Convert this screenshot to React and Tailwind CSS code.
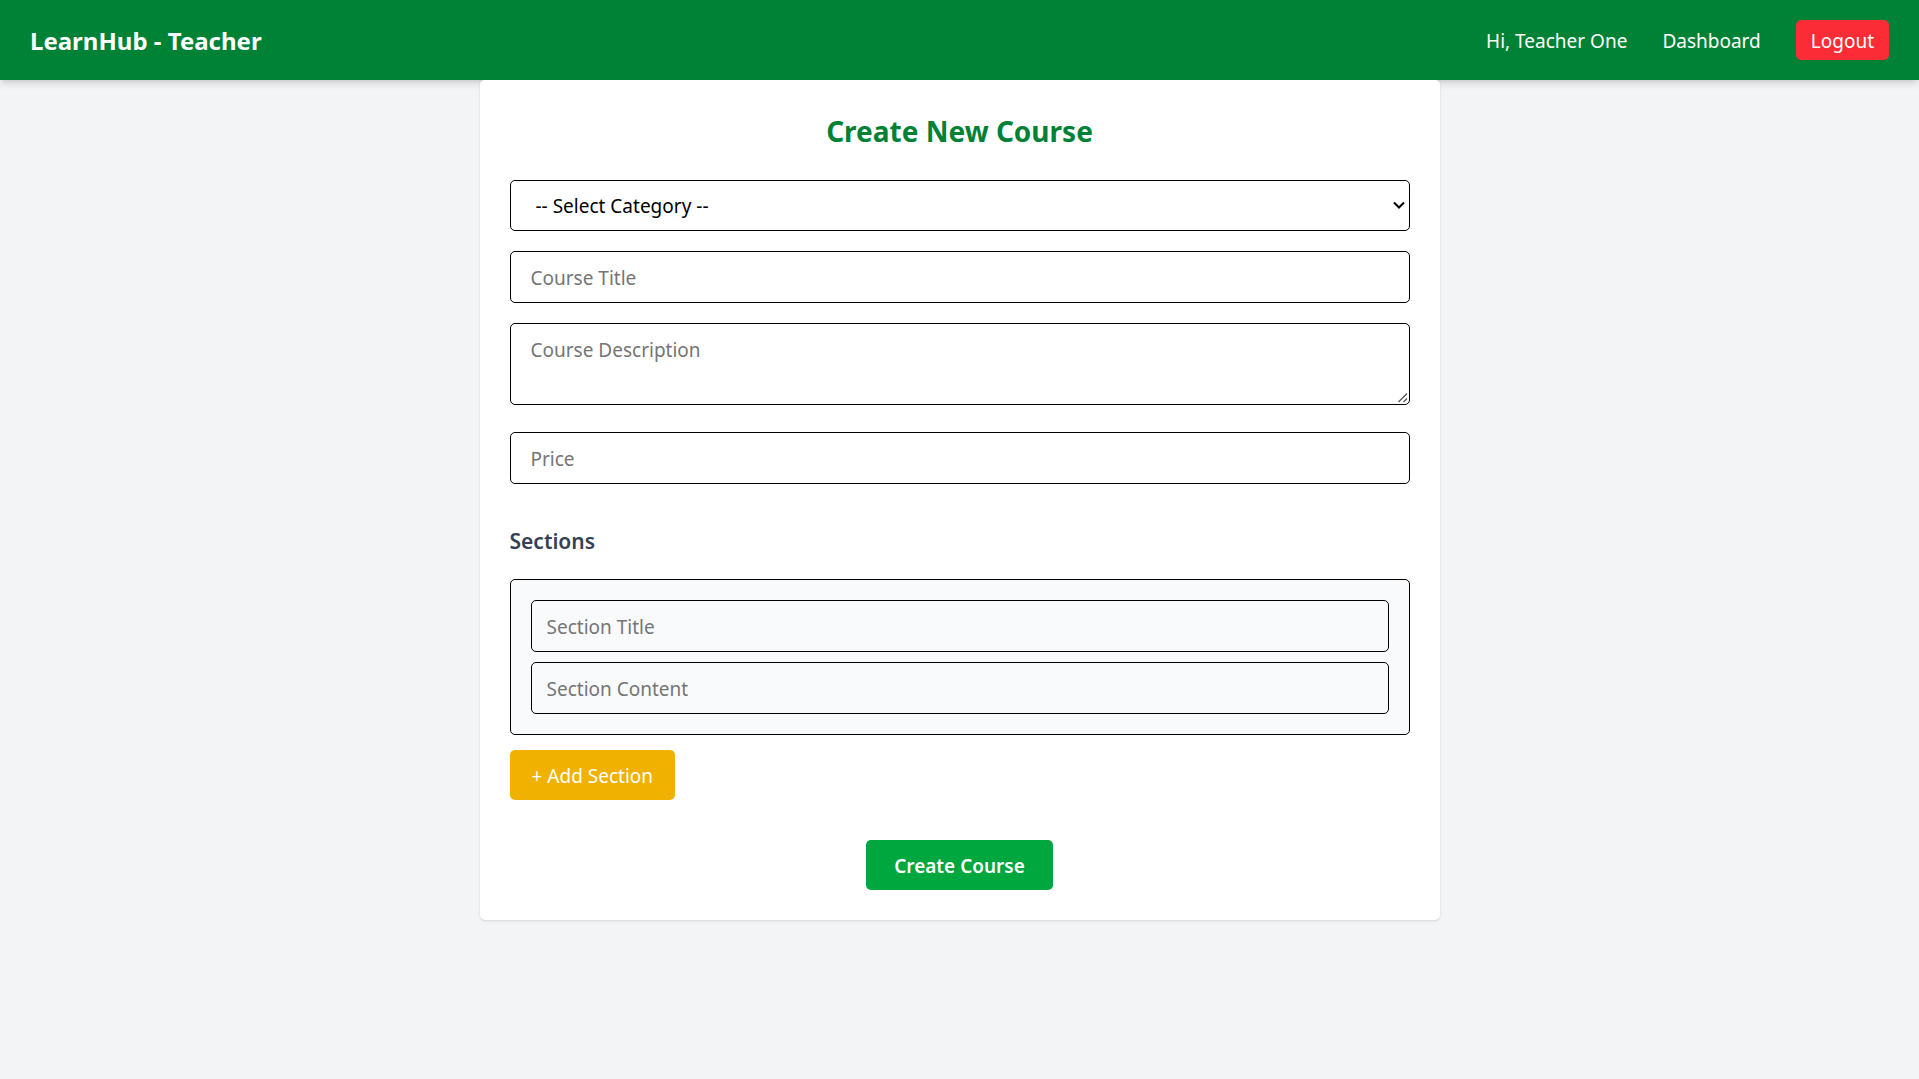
import { useState } from "react";

const field = "block w-full rounded-[5px] border border-black pt-[13px] pb-[11px] leading-[26px] placeholder:text-[#757575]";

function Navbar() {
  return (
    <nav className="flex h-20 items-center justify-between bg-[#008236] px-[30px] text-white shadow-[0_5px_8px_-1px_rgb(0_0_0/0.1),0_3px_5px_-2px_rgb(0_0_0/0.1)]">
      <h1 className="pt-0.5 text-2xl font-bold">LearnHub - Teacher</h1>
      <div className="flex items-center gap-[35px]">
        <span className="pt-0.5">Hi, Teacher One</span>
        <a href="#dashboard" className="pt-0.5">Dashboard</a>
        <button type="button" className="rounded-[5px] bg-[#fb2c36] px-[15px] pt-[9px] pb-[7px] leading-6">Logout</button>
      </div>
    </nav>
  );
}

function CategorySelect() {
  return (
    <div className="relative mb-5">
      <select aria-label="Category" className="block h-[51px] w-full appearance-none rounded-[5px] border border-black bg-white pt-0.5 pr-10 pl-[25px]">
        <option>-- Select Category --</option>
      </select>
      <svg className="pointer-events-none absolute top-[21px] right-[5px] h-2 w-3" viewBox="0 0 12 8" fill="none" stroke="black" strokeWidth="2">
        <path d="M1 1.5 6 6.5 11 1.5" />
      </svg>
    </div>
  );
}

function DescriptionField() {
  return (
    <div className="relative mb-[27px]">
      <textarea aria-label="Course Description" placeholder="Course Description" className={`${field} h-[82px] resize-none px-5`} />
      <svg className="pointer-events-none absolute right-[2px] bottom-[2px] h-[10px] w-[10px]" viewBox="0 0 10 10" fill="none" stroke="#555555" strokeWidth="1.3">
        <path d="M0.5 9 9 0.5M5.5 9 9 5.5" />
      </svg>
    </div>
  );
}

export default function App() {
  const [sections, setSections] = useState([0]);

  return (
    <div className="min-h-screen bg-gray-100 font-['Noto_Sans',sans-serif] text-[19px] text-black">
      <Navbar />
      <main className="relative mx-auto max-w-[960px] rounded-[5px] bg-white px-[30px] pt-[31px] pb-[30px] shadow">
        <h2 className="mb-[29px] text-center text-[28px] leading-10 font-bold text-[#008236]">Create New Course</h2>
        <form onSubmit={(e) => e.preventDefault()}>
          <CategorySelect />
          <input aria-label="Course Title" placeholder="Course Title" className={`${field} mb-5 px-5`} />
          <DescriptionField />
          <input aria-label="Price" type="number" placeholder="Price" className={`${field} px-5`} />
          <h3 className="mt-10 mb-5 text-[21px] leading-[35px] font-semibold text-[#364153]">Sections</h3>
          {sections.map((id) => (
            <div key={id} className="mb-[15px] flex flex-col gap-[10px] rounded-[5px] border border-black bg-gray-50 p-5">
              <input aria-label="Section Title" placeholder="Section Title" className={`${field} px-[15px]`} />
              <input aria-label="Section Content" placeholder="Section Content" className={`${field} px-[15px]`} />
            </div>
          ))}
          <button type="button" onClick={() => setSections([...sections, sections.length])} className="block h-[50px] rounded-[5px] bg-[#f0b100] px-[22px] pt-0.5 text-white">
            + Add Section
          </button>
          <div className="mt-10 flex justify-center">
            <button type="submit" className="h-[50px] rounded-[5px] bg-[#00a63e] px-7 pt-0.5 font-semibold text-white">Create Course</button>
          </div>
        </form>
      </main>
    </div>
  );
}
